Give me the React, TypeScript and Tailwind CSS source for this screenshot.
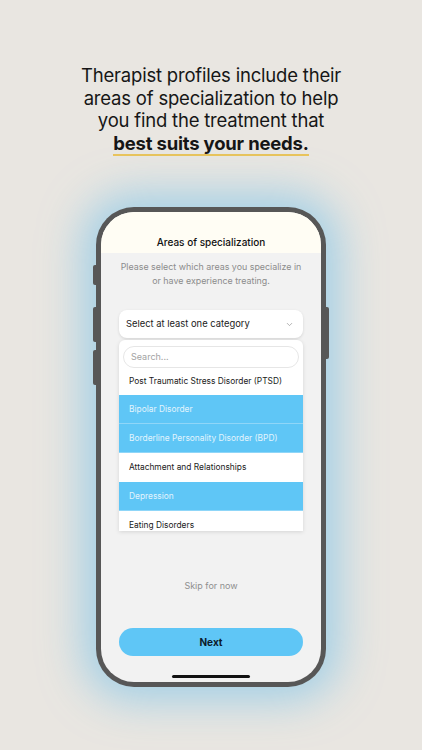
import React from 'react';
import { ChevronDown } from 'lucide-react';

const items = [
    { label: 'Bipolar Disorder', selected: true },
    { label: 'Borderline Personality Disorder (BPD)', selected: true },
    { label: 'Attachment and Relationships', selected: false },
    { label: 'Depression', selected: true },
    { label: 'Eating Disorders', selected: false },
];

const PhoneScreen: React.FC = () => (
    <div className="h-full w-full rounded-[33px] bg-[#f2f2f2] overflow-hidden flex flex-col items-center">
        <div className="w-full bg-[#fffdf4] pt-[23px] pb-[4px] flex justify-center">
            <span className="text-[10px] leading-[14px] font-medium text-[#111]">Areas of specialization</span>
        </div>
        <p className="mt-[7px] text-center text-[8.9px] leading-[14px] text-[#8c8c8c] px-3">
            Please select which areas you specialize in
            <br />
            or have experience treating.
        </p>

        <div className="mt-[22px] w-[184px] flex flex-col">
            <div className="h-[28px] rounded-[8px] bg-white shadow-[0_1px_3px_rgba(0,0,0,0.12)] flex items-center justify-between pl-[7px] pr-[9px]">
                <span className="text-[9.4px] text-[#1a1a1a]">Select at least one category</span>
                <ChevronDown className="w-[9px] h-[9px] text-[#9a9a9a]" strokeWidth={2} />
            </div>

            <div className="mt-[2px] h-[191px] overflow-hidden rounded-t-[6px] bg-white shadow-[0_1px_4px_rgba(0,0,0,0.12)] flex flex-col">
                <div className="shrink-0 px-[4px] pt-[6px]">
                    <div className="h-[22px] rounded-full border border-[#e6e6e6] bg-white flex items-center px-[7px]">
                        <span className="text-[9px] text-[#a3a3a3]">Search...</span>
                    </div>
                </div>
                <div className="shrink-0 h-[27px] flex items-center px-[10px]">
                    <span className="text-[8.4px] text-[#1a1a1a]">Post Traumatic Stress Disorder (PTSD)</span>
                </div>
                {items.map((it) => (
                    <div
                        key={it.label}
                        className={
                            it.selected
                                ? 'h-[29px] shrink-0 flex items-center px-[10px] bg-[#5fc6f6] border-b border-[#8fd6f8]'
                                : 'h-[29px] shrink-0 flex items-center px-[10px] bg-white'
                        }
                    >
                        <span className={it.selected ? 'text-[8.4px] text-[#e2f4fd]' : 'text-[8.4px] text-[#1a1a1a]'}>{it.label}</span>
                    </div>
                ))}
            </div>
        </div>

        <span className="mt-[49px] text-[9px] leading-[12px] text-[#8f8f8f]">Skip for now</span>

        <button className="mt-[36px] w-[184px] h-[28px] rounded-full bg-[#5fc6f6] text-[10px] font-bold text-[#0c1b2a]">Next</button>

        <div className="mt-auto mb-[4px] w-[78px] h-[3px] rounded-full bg-[#111]" />
    </div>
);

export default function App() {
    return (
        <div
            className="w-[422px] h-[750px] bg-[#e9e6e1] flex flex-col items-center overflow-hidden"
            style={{ fontFamily: 'Inter, "Noto Sans", sans-serif' }}
        >
            <h1 className="mt-[64px] text-center text-[18.5px] leading-[22.5px] tracking-[-0.2px] text-[#161616] font-normal">
                Therapist profiles include their
                <br />
                areas of specialization to help
                <br />
                you find the treatment that
                <br />
                <span className="font-bold border-b-[2.5px] border-[#e9c45b]">best suits your needs.</span>
            </h1>

            <div className="relative mt-[53px] w-[230px] h-[480px] rounded-[38px] bg-[#575757] p-[5px] shadow-[0_0_42px_14px_rgba(118,194,234,0.6)]">
                <div className="absolute left-[-3px] top-[58px] w-[3px] h-[20px] rounded-l-[2px] bg-[#575757]" />
                <div className="absolute left-[-3px] top-[100px] w-[3px] h-[35px] rounded-l-[2px] bg-[#575757]" />
                <div className="absolute left-[-3px] top-[143px] w-[3px] h-[35px] rounded-l-[2px] bg-[#575757]" />
                <div className="absolute right-[-3px] top-[100px] w-[3px] h-[52px] rounded-r-[2px] bg-[#575757]" />
                <PhoneScreen />
            </div>
        </div>
    );
}
